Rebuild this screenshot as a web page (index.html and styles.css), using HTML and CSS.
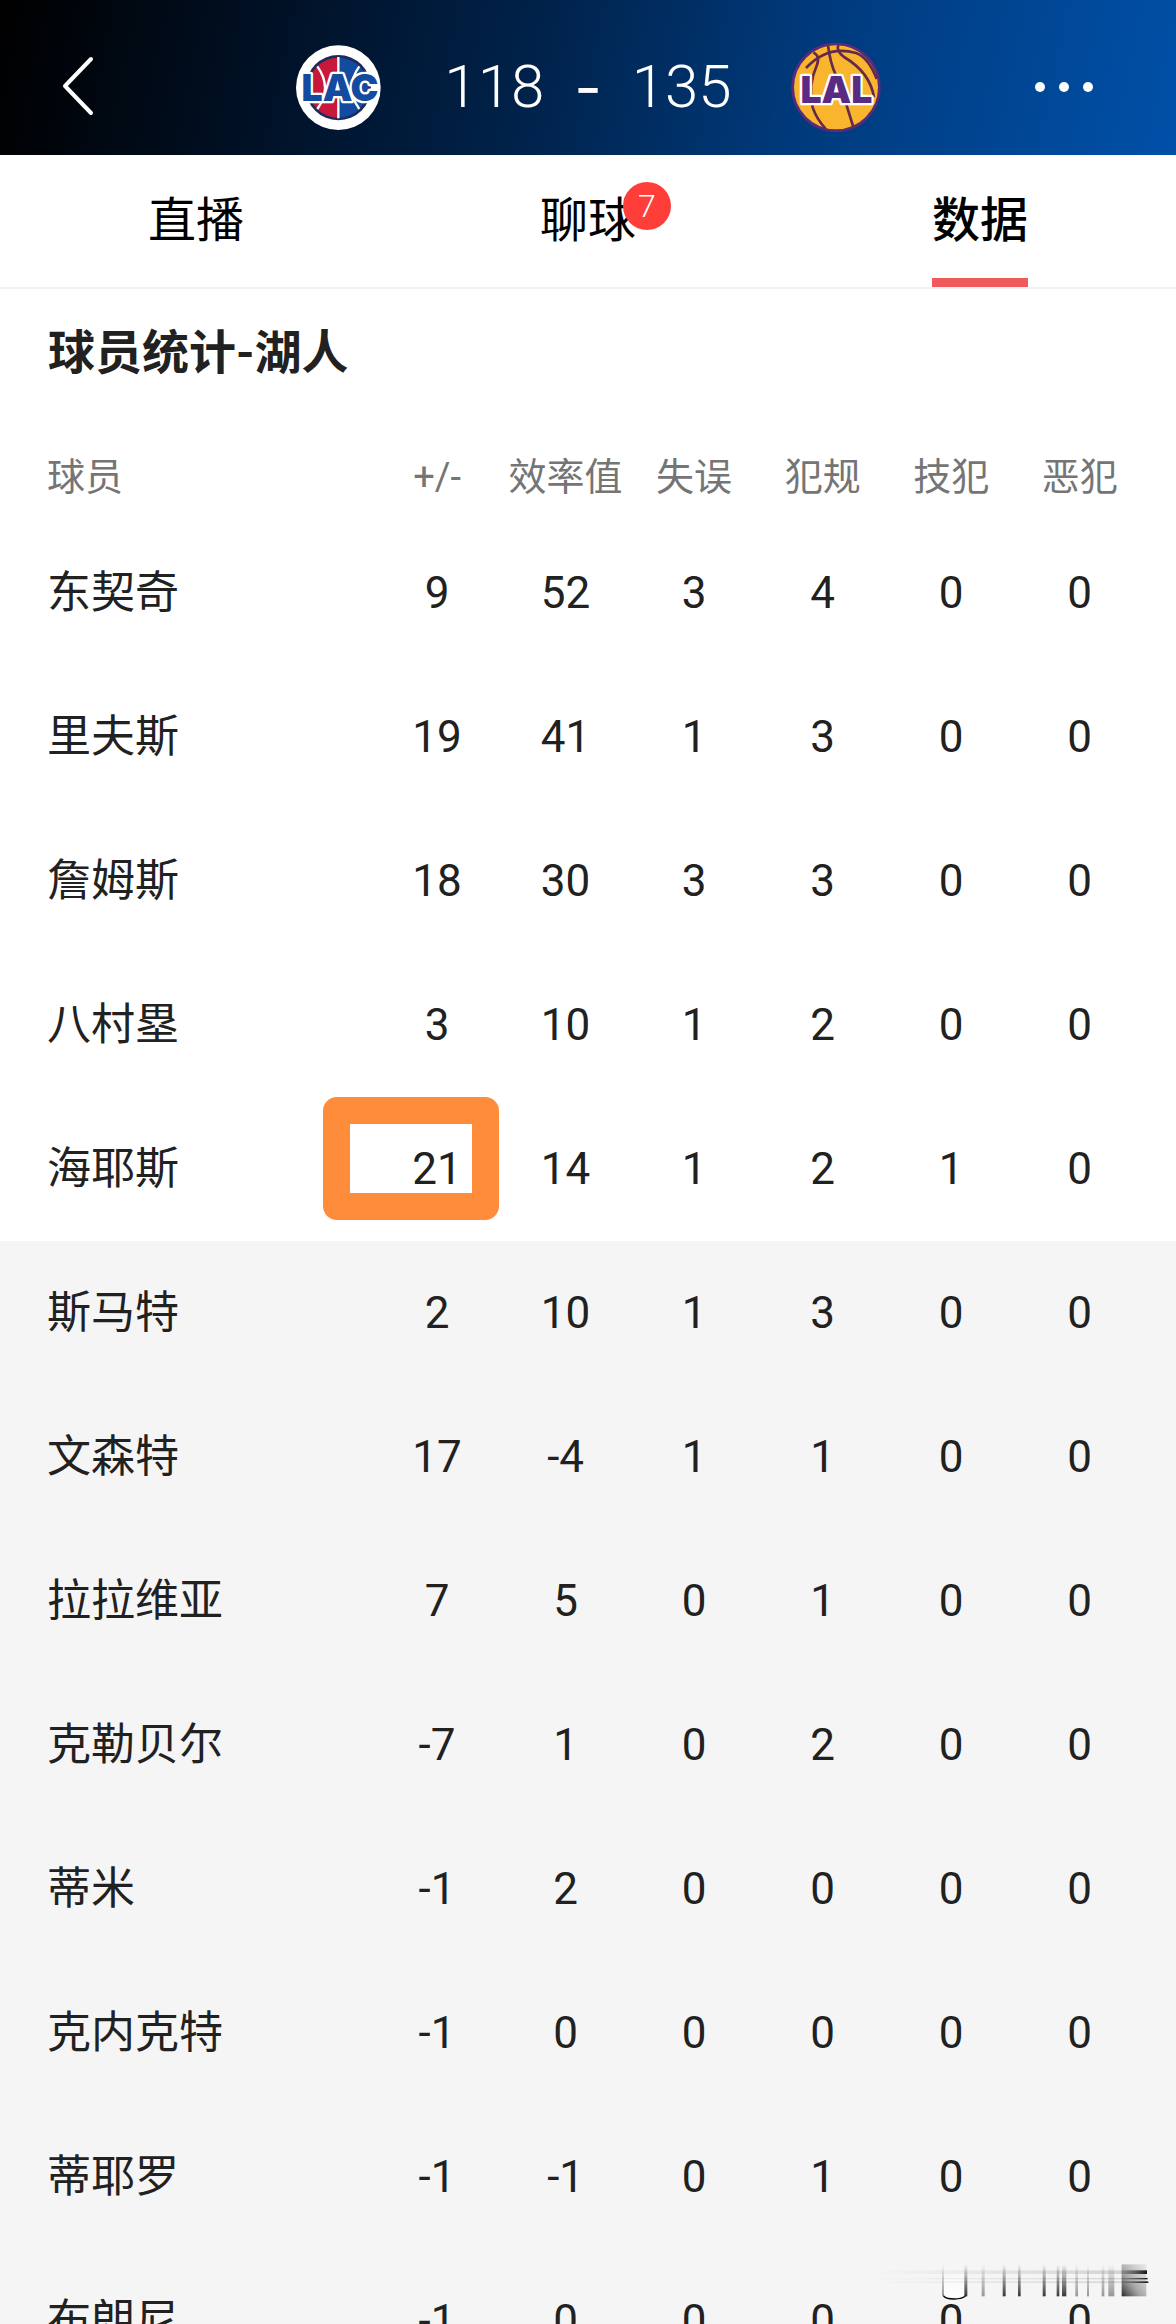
FILE: index.html
```html
<!DOCTYPE html>
<html lang="zh-CN">
<head>
    <meta charset="utf-8">
    <meta name="viewport" content="width=device-width, initial-scale=1">
    <title>球员统计-湖人</title>
    <link rel="stylesheet" href="styles.css">
</head>
<body>

<header class="topbar">
    <button class="icon-button" type="button" aria-label="返回">
        <svg width="36" height="64" viewBox="0 0 36 64">
            <path d="M31 4 L5 31 L31 58" fill="none" stroke="#fff" stroke-width="4" stroke-linecap="round" stroke-linejoin="round"/>
        </svg>
    </button>

    <div class="match">
        <svg class="logo" width="120" height="120" viewBox="0 0 360 360">
            <circle cx="175" cy="176" r="127" fill="#fff"/>
            <circle cx="175" cy="176" r="98" fill="#1d2a5c"/>
            <path d="M175 86 A90 90 0 0 0 175 266 Z" fill="#c8193c"/>
            <path d="M175 86 A90 90 0 0 1 175 266 Z" fill="#124ba0"/>
            <path d="M175 84 V268 M112 112 Q158 176 112 240 M238 112 Q192 176 238 240" fill="none" stroke="#fff" stroke-width="7"/>
            <text class="logo-text lac" x="180" y="217" text-anchor="middle">LAC</text>
        </svg>
        <div class="score">
            <span>118</span>
            <span class="dash">-</span>
            <span>135</span>
        </div>
        <svg class="logo" width="120" height="120" viewBox="0 0 360 360">
            <circle cx="180" cy="175" r="130" fill="#f9b52e" stroke="#5a2b7b" stroke-width="8"/>
            <g fill="none" stroke="#652a49" stroke-width="8">
                <path d="M90 117 Q155 47 240 72 Q278 86 302 150"/>
                <path d="M112 70 Q134 82 122 110 Q95 170 110 235 Q122 270 148 298"/>
                <path d="M156 49 Q162 100 180 140 L212 230 L232 294"/>
                <path d="M187 46 Q180 66 204 84 Q282 130 294 205"/>
            </g>
            <text class="logo-text lal" x="181" y="221" text-anchor="middle">LAL</text>
        </svg>
    </div>

    <button class="icon-button" type="button" aria-label="更多">
        <svg width="60" height="12" viewBox="0 0 60 12" fill="#fff">
            <circle cx="6" cy="6" r="5"/>
            <circle cx="30" cy="6" r="5"/>
            <circle cx="54" cy="6" r="5"/>
        </svg>
    </button>
</header>

<nav class="tabs">
    <a class="tab" href="#live"><span class="tab-label">直播</span></a>
    <a class="tab" href="#chat"><span class="tab-label">聊球<span class="badge">7</span></span></a>
    <a class="tab active" href="#stats" aria-current="page"><span class="tab-label">数据</span></a>
</nav>

<main id="stats">
    <h1>球员统计-湖人</h1>

    <table class="stats">
        <thead>
            <tr>
                <th class="player" scope="col">球员</th>
                <th scope="col">+/-</th>
                <th scope="col">效率值</th>
                <th scope="col">失误</th>
                <th scope="col">犯规</th>
                <th scope="col">技犯</th>
                <th scope="col">恶犯</th>
                <td class="edge"></td>
            </tr>
        </thead>
        <tbody>
            <tr><th class="player" scope="row">东契奇</th><td>9</td><td>52</td><td>3</td><td>4</td><td>0</td><td>0</td></tr>
            <tr><th class="player" scope="row">里夫斯</th><td>19</td><td>41</td><td>1</td><td>3</td><td>0</td><td>0</td></tr>
            <tr><th class="player" scope="row">詹姆斯</th><td>18</td><td>30</td><td>3</td><td>3</td><td>0</td><td>0</td></tr>
            <tr><th class="player" scope="row">八村塁</th><td>3</td><td>10</td><td>1</td><td>2</td><td>0</td><td>0</td></tr>
            <tr><th class="player" scope="row">海耶斯</th><td class="marked">21</td><td>14</td><td>1</td><td>2</td><td>1</td><td>0</td></tr>
        </tbody>
        <!-- substitutes -->
        <tbody class="bench">
            <tr><th class="player" scope="row">斯马特</th><td>2</td><td>10</td><td>1</td><td>3</td><td>0</td><td>0</td><td></td></tr>
            <tr><th class="player" scope="row">文森特</th><td>17</td><td>-4</td><td>1</td><td>1</td><td>0</td><td>0</td><td></td></tr>
            <tr><th class="player" scope="row">拉拉维亚</th><td>7</td><td>5</td><td>0</td><td>1</td><td>0</td><td>0</td><td></td></tr>
            <tr><th class="player" scope="row">克勒贝尔</th><td>-7</td><td>1</td><td>0</td><td>2</td><td>0</td><td>0</td><td></td></tr>
            <tr><th class="player" scope="row">蒂米</th><td>-1</td><td>2</td><td>0</td><td>0</td><td>0</td><td>0</td><td></td></tr>
            <tr><th class="player" scope="row">克内克特</th><td>-1</td><td>0</td><td>0</td><td>0</td><td>0</td><td>0</td><td></td></tr>
            <tr><th class="player" scope="row">蒂耶罗</th><td>-1</td><td>-1</td><td>0</td><td>1</td><td>0</td><td>0</td><td></td></tr>
            <tr><th class="player" scope="row">布朗尼</th><td>-1</td><td>0</td><td>0</td><td>0</td><td>0</td><td>0</td><td></td></tr>
        </tbody>
    </table>
</main>

<svg class="streaks" width="280" height="40" viewBox="0 0 840 120" aria-hidden="true">
    <defs>
        <linearGradient id="down" x1="0" y1="0" x2="0" y2="1">
            <stop offset="0" stop-color="#222" stop-opacity="0"/>
            <stop offset="1" stop-color="#222" stop-opacity="0.9"/>
        </linearGradient>
        <linearGradient id="soft" x1="0" y1="0" x2="0" y2="1">
            <stop offset="0" stop-color="#222" stop-opacity="0"/>
            <stop offset="1" stop-color="#222" stop-opacity="0.45"/>
        </linearGradient>
        <linearGradient id="across" x1="0" y1="0" x2="1" y2="0">
            <stop offset="0" stop-color="#222" stop-opacity="0"/>
            <stop offset="0.9" stop-color="#222" stop-opacity="0.15"/>
            <stop offset="1" stop-color="#000" stop-opacity="0.9"/>
        </linearGradient>
        <linearGradient id="glow" x1="0" y1="0" x2="0" y2="1">
            <stop offset="0" stop-color="#fff" stop-opacity="0"/>
            <stop offset="1" stop-color="#fff"/>
        </linearGradient>
        <linearGradient id="block" x1="0" y1="1" x2="1" y2="0">
            <stop offset="0" stop-color="#111" stop-opacity="0.9"/>
            <stop offset="0.4" stop-color="#555" stop-opacity="0.5"/>
            <stop offset="1" stop-color="#999" stop-opacity="0.15"/>
        </linearGradient>
    </defs>
    <rect x="222" y="4" width="64" height="100" fill="url(#glow)"/>
    <path d="M223 98 Q228 108 255 108 Q282 108 290 98" fill="none" stroke="#000" stroke-width="4"/>
    <g fill="url(#down)">
        <rect x="286" y="4" width="9" height="96"/>
        <rect x="401" y="4" width="9" height="96"/>
        <rect x="447" y="4" width="8" height="96"/>
        <rect x="521" y="4" width="9" height="96"/>
        <rect x="563" y="4" width="8" height="96"/>
        <rect x="579" y="4" width="13" height="96"/>
    </g>
    <g fill="url(#soft)">
        <rect x="219" y="4" width="6" height="94"/>
        <rect x="338" y="4" width="9" height="96"/>
        <rect x="619" y="4" width="8" height="96"/>
        <rect x="654" y="4" width="6" height="96"/>
        <rect x="698" y="4" width="8" height="96"/>
        <rect x="718" y="4" width="18" height="96"/>
    </g>
    <rect x="758" y="4" width="74" height="96" fill="url(#block)"/>
    <g fill="url(#across)">
        <rect x="10" y="22" width="824" height="11"/>
        <rect x="10" y="45" width="826" height="4"/>
        <rect x="10" y="55" width="828" height="5"/>
    </g>
</svg>

</body>
</html>
```
FILE: styles.css
```css
* {
    box-sizing: border-box;
}

body {
    position: relative;
    margin: 0;
    height: 100vh;
    overflow: hidden;
    background: #fff;
    color: #212121;
    font-family: Roboto, "Noto Sans CJK SC", sans-serif;
}

/* score header */
.topbar {
    display: flex;
    align-items: center;
    justify-content: space-between;
    height: 155px;
    padding: 22px 52px 0;
    background: linear-gradient(102deg, #000 0%, #001024 22%, #002148 44%, #003a7c 68%, #0050a8 100%);
}

.icon-button {
    display: flex;
    align-items: center;
    justify-content: center;
    width: 120px;
    height: 80px;
    padding: 0 0 4px;
    border: 0;
    background: none;
}

.icon-button:first-child {
    justify-content: flex-start;
    padding-left: 8px;
}

.match {
    display: flex;
    align-items: center;
}

.score {
    display: flex;
    align-items: center;
    justify-content: center;
    gap: 30px;
    width: 376px;
    padding-bottom: 4px;
    color: #fff;
    font-size: 60px;
    font-weight: 300;
    line-height: 80px;
}

.dash {
    font-family: Inter, sans-serif;
    font-weight: 400;
}

.logo-text {
    font-family: Inter, "Liberation Sans", sans-serif;
    font-size: 112px;
    font-weight: 900;
    stroke: #fff;
    stroke-width: 14px;
    stroke-linejoin: round;
    paint-order: stroke;
}

.lac {
    fill: #124ba0;
}

.lal {
    fill: #5a2b82;
}

/* tabs */
.tabs {
    display: flex;
    height: 134px;
    border-bottom: 2px solid #f2f2f2;
}

.tab {
    display: flex;
    flex: 1;
    justify-content: center;
    padding-top: 9px;
    color: #000;
    font-size: 48px;
    line-height: 114px;
    text-decoration: none;
}

.tab-label {
    position: relative;
}

.active .tab-label {
    border-bottom: 9px solid #ef5b5b;
    font-weight: 500;
}

.badge {
    position: absolute;
    top: 18px;
    left: 83px;
    width: 48px;
    height: 48px;
    border-radius: 50%;
    background: #ff3e3a;
    color: #fff;
    font-size: 32px;
    font-weight: 300;
    line-height: 48px;
    text-align: center;
}

/* player table */
h1 {
    margin: 0;
    padding: 32px 48px 48px;
    font-size: 47px;
    line-height: 64px;
}

.stats {
    width: 100%;
    border-collapse: collapse;
    table-layout: fixed;
}

.stats th,
.stats td {
    height: 144px;
    padding: 0;
    font-size: 44px;
    font-weight: 400;
    line-height: 64px;
    text-align: center;
    white-space: nowrap;
}

.stats thead th {
    height: 88px;
    color: #757575;
    font-size: 38px;
}

.stats .player {
    width: 31.7%;
    padding-left: 47px;
    text-align: left;
}

.stats thead .edge {
    width: 32px;
    height: 88px;
}

.bench {
    background: #f5f5f5;
}

.marked {
    position: relative;
}

.marked::after {
    content: "";
    position: absolute;
    top: 0;
    right: 2px;
    left: -50px;
    height: 69px;
    border: 27px solid #ff8c3a;
    border-radius: 14px;
}

.streaks {
    position: absolute;
    right: 27px;
    bottom: 21px;
}
```
